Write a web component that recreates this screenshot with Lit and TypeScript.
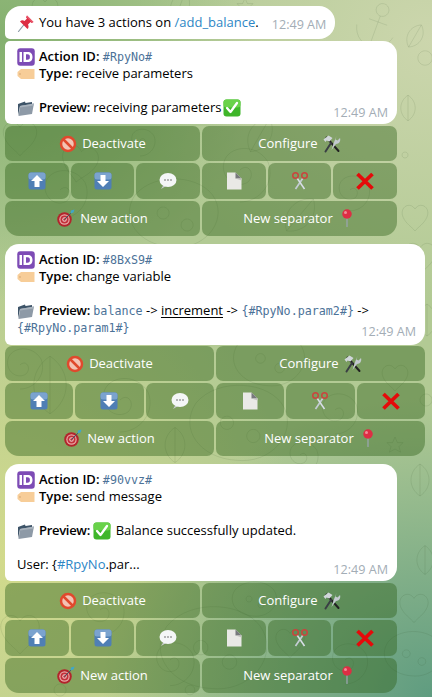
import { LitElement, html, css, svg, nothing } from "lit";
import { customElement } from "lit/decorators.js";

const icons: Record<string, unknown> = {
  pin: svg`<path d="M3 35 L15 20" stroke="#8a98a5" stroke-width="2.400" stroke-linecap="round"/><path d="M20 3 L33 16 L29 18 L27 16 L22 21 C24 25 23 28 21 30 L6 15 C9 12 12 12 15 14 L20 9 L18 7 Z" fill="#dd2e44"/><path d="M20 3 L33 16 L30 17 L19 6Z" fill="#ea596e"/>`,
  id: svg`<rect x="0.500" y="0.500" width="35" height="35" rx="6" fill="#7d4bb5"/><rect x="5" y="8" width="5" height="20" fill="#fff"/><path d="M13 8 H21 C28 8 31 12 31 18 C31 24 28 28 21 28 H13 Z M18 12.500 V23.500 H21 C24.500 23.500 25.800 21.500 25.800 18 C25.800 14.500 24.500 12.500 21 12.500 Z" fill="#fff" fill-rule="evenodd"/>`,
  tag: svg`<path d="M1 14 L8 8 H35 V28 H8 L1 22 Z" fill="#f7cd98"/><circle cx="6" cy="18" r="1.400" fill="#c79a66"/>`,
  folder: svg`<path d="M2 10 L16 5 L17 8 L30 6 V12 L6 14 L2 33Z" fill="#3e5468"/><path d="M6 14 L34 9 L30 30 L3 34Z" fill="#8e9aa7"/><path d="M6 14 L34 9 L33 13 L6 17Z" fill="#a9b3bd"/>`,
  check: svg`<rect x="1" y="1" width="34" height="34" rx="6" fill="#3fb62a"/><rect x="1" y="1" width="34" height="16" rx="6" fill="#69d24a"/><path d="M8 18 L15 26 L28 8" fill="none" stroke="#fff" stroke-width="4.600" stroke-linecap="round" stroke-linejoin="round"/>`,
  no: svg`<circle cx="18" cy="18" r="14" fill="#f3c3b4" stroke="#e0492d" stroke-width="5"/><path d="M8 8 L28 28" stroke="#e0492d" stroke-width="5"/>`,
  tools: svg`<path d="M7 5 L31 32" stroke="#222" stroke-width="4" stroke-linecap="round"/><path d="M16 16 L5 33" stroke="#3a3f44" stroke-width="4" stroke-linecap="round"/><path d="M1 9 L11 1 L19 6 L13 13 L7 11 L5 14Z" fill="#d0d6da"/><path d="M21 17 L27 2 L25 9 L29 11 L34 6 C36 12 32 18 26 18 L17 30 Z" fill="#c3cacf"/>`,
  up: svg`<rect x="1" y="1" width="34" height="34" rx="5" fill="#4f7fb5"/><rect x="1" y="1" width="34" height="14" rx="5" fill="#7ba3cf"/><path d="M18 6 L30 18 H23 V30 H13 V18 H6Z" fill="#fff"/>`,
  down: svg`<rect x="1" y="1" width="34" height="34" rx="5" fill="#4f7fb5"/><rect x="1" y="1" width="34" height="14" rx="5" fill="#7ba3cf"/><path d="M18 30 L30 18 H23 V6 H13 V18 H6Z" fill="#fff"/>`,
  chat: svg`<path d="M9 26 L4 34 L14 28Z" fill="#c9ccd0"/><ellipse cx="18" cy="16" rx="17" ry="14" fill="#f4f6f7"/><circle cx="12" cy="16" r="1.500" fill="#555"/><circle cx="18" cy="16" r="1.500" fill="#555"/><circle cx="24" cy="16" r="1.500" fill="#555"/>`,
  page: svg`<path d="M4 1 H21 L33 13 V35 H4Z" fill="#e9e9e6"/><path d="M21 1 L33 13 H21Z" fill="#77797c"/><path d="M21 13 H33 V17Z" fill="#c4c4c0"/>`,
  scissors: svg`<path d="M12 12 L27 34 M24 12 L9 34" stroke="#c4ccd4" stroke-width="3.400"/><path d="M12 12 L27 34" stroke="#e7ecef" stroke-width="1.400"/><circle cx="9" cy="7" r="5.500" fill="none" stroke="#c9453e" stroke-width="3"/><circle cx="27" cy="7" r="5.500" fill="none" stroke="#c9453e" stroke-width="3"/>`,
  x: svg`<path d="M3 4 L33 33 M33 4 L3 33" stroke="#e50a0a" stroke-width="7.500"/>`,
  dart: svg`<circle cx="15" cy="21" r="14.500" fill="#b3242c"/><circle cx="15" cy="21" r="10.500" fill="#e8a8a4"/><circle cx="15" cy="21" r="8" fill="#c4303a"/><circle cx="15" cy="21" r="4.500" fill="#ecc"/><circle cx="15" cy="21" r="2.500" fill="#c4303a"/><path d="M15 21 L29 7" stroke="#3d5a68" stroke-width="2"/><path d="M27 9 L28 3 L35 1 L33 7 Z" fill="#3fa7c9"/>`,
  rpin: svg`<path d="M18 18 L18 35" stroke="#9aa5ae" stroke-width="2.600" stroke-linecap="round"/><circle cx="18" cy="10" r="9.500" fill="#dd2e44"/><circle cx="15" cy="7" r="3" fill="#f28a96"/>`,
};

const icon = (name: string, cls = "") =>
  html`<svg class="ic ${cls}" viewBox="0 0 36 36" aria-hidden="true">${icons[name]}</svg>`;

const d = (x: number, y: number, s: number, r: number, p: string) =>
  svg`<path transform="translate(${x} ${y}) rotate(${r}) scale(${s})" d="${p}" vector-effect="non-scaling-stroke"/>`;
const HEART = "M0 -6 C-5 -14 -16 -8 -12 2 C-9 9 -3 12 0 16 C3 12 9 9 12 2 C16 -8 5 -14 0 -6Z";
const LEAF = "M0 -16 C12 -8 12 8 0 16 C-12 8 -12 -8 0 -16Z M0 -16 V16";
const BLOB = "M-20 -10 C-10 -22 14 -20 20 -8 C26 4 14 18 -2 16 C-18 15 -28 2 -20 -10Z M-6 -4 A3 3 0 1 0 -5.900 -4 M6 2 A3 3 0 1 0 6.100 2";
const SPIRAL = "M0 0 C4 -4 8 2 4 6 C-2 10 -10 4 -8 -4 C-6 -12 8 -14 14 -4 C18 6 10 16 0 16";
const ANCHOR = "M0 -14 A4 4 0 1 0 0.100 -14 M0 -6 V14 M-12 4 C-10 12 -4 14 0 14 C4 14 10 12 12 4 M-6 -2 H6";
const STAR = "M0 -10 L3 -3 L10 -3 L5 2 L7 9 L0 5 L-7 9 L-5 2 L-10 -3 L-3 -3Z";
const RING = "M0 -6 A6 6 0 1 0 0.100 -6";
const doodles: [number, number, number, number, string][] = [
  [377, 25, 1.6, 20, ANCHOR], [415, 36, 0.8, 30, LEAF], [408, 108, 0.8, 0, LEAF], [425, 58, 1.2, 0, RING],
  [45, 8, 1, 0, HEART], [180, 6, 1, 20, LEAF], [245, 6, 0.8, 0, STAR], [405, 155, 0.5, 0, RING],
  [80, 160, 1.4, 10, HEART], [60, 190, 1.8, 0, SPIRAL], [175, 215, 2, 0, BLOB], [20, 135, 1.3, 0, HEART],
  [240, 170, 2, 0, SPIRAL], [300, 215, 1.3, 40, LEAF], [350, 190, 1.3, 0, SPIRAL], [415, 215, 1, 0, HEART],
  [140, 140, 1, 0, SPIRAL], [260, 135, 1.2, 30, LEAF], [420, 255, 1.2, 0, HEART], [427, 320, 1, 0, LEAF],
  [50, 385, 1.8, 0, LEAF], [120, 400, 2, 0, SPIRAL], [270, 360, 1.6, 0, BLOB], [240, 425, 2.200, 0, BLOB],
  [335, 410, 1.5, 0, SPIRAL], [395, 375, 1, 0, HEART], [395, 445, 0.8, 0, STAR], [175, 445, 1.1, 0, LEAF],
  [20, 365, 1.5, 0, SPIRAL], [426, 400, 1, 0, RING], [300, 455, 1.2, 0, SPIRAL], [420, 480, 1, 0, LEAF],
  [20, 630, 1.5, 0, HEART], [100, 610, 1.6, 0, SPIRAL], [170, 660, 1.6, 0, SPIRAL], [215, 650, 2.400, 0, BLOB],
  [290, 640, 1.1, 0, HEART], [345, 660, 1.5, 0, SPIRAL], [414, 605, 1.1, 0, HEART], [414, 655, 1.3, 0, BLOB],
  [255, 600, 1, 0, BLOB], [190, 690, 0.8, 0, RING], [60, 690, 1, 0, RING], [425, 560, 0.9, 0, LEAF],
];

type Row = { label?: string; icon?: string; after?: boolean }[];
const keyboard: Row[] = [
  [{ label: "Deactivate", icon: "no" }, { label: "Configure", icon: "tools", after: true }],
  [{ icon: "up" }, { icon: "down" }, { icon: "chat" }, { icon: "page" }, { icon: "scissors" }, { icon: "x" }],
  [{ label: "New action", icon: "dart" }, { label: "New separator", icon: "rpin", after: true }],
];

@customElement("action-keyboard")
class ActionKeyboard extends LitElement {
  static styles = css`
    :host { display: flex; flex-direction: column; gap: 2px; margin-top: 2px; }
    .row { display: flex; gap: 2px; }
    .btn { flex: 1 1 0; min-width: 0; height: 35.330px; display: flex; align-items: center; justify-content: center; gap: 5px;
      background: rgba(45, 95, 25, 0.42); border-radius: 7px; color: #fff; font-size: 13px; font-weight: 500; }
    .last .btn:first-child { border-bottom-left-radius: 14px; }
    .last .btn:last-child { border-bottom-right-radius: 14px; }
    .ic { width: 18px; height: 18px; flex: none; }
  `;
  render() {
    return keyboard.map(
      (row, i) => html`<div class="row ${i === 2 ? "last" : ""}">
        ${row.map((b) => {
          const ic = html`<svg class="ic" viewBox="0 0 36 36" aria-hidden="true">${icons[b.icon!]}</svg>`;
          return html`<div class="btn">${b.after ? nothing : ic}${b.label ? html`<span>${b.label}</span>` : nothing}${b.after ? ic : nothing}</div>`;
        })}
      </div>`
    );
  }
}

@customElement("app-root")
class AppRoot extends LitElement {
  static styles = css`
    :host { display: block; font-family: "Open Sans", "Noto Sans", sans-serif; font-size: 13px; line-height: 17px; color: #000; }
    .chat { position: relative; width: 432px; height: 697px; overflow: hidden; box-sizing: border-box;
      padding: 6px 7px 0 5px; display: flex; flex-direction: column; align-items: flex-start;
      background:
        radial-gradient(ellipse 260px 260px at 0 40px, #84b06f 0, rgba(132,176,111,0) 100%),
        radial-gradient(ellipse 300px 260px at 432px 40px, #ccd6ad 0, rgba(204,214,173,0) 100%),
        radial-gradient(ellipse 330px 300px at 432px 697px, #5f9c80 0, rgba(95,156,128,0) 100%),
        radial-gradient(ellipse 300px 330px at 0 560px, #d2da8c 0, rgba(210,218,140,0) 100%),
        #b2ca94; }
    .doodles { position: absolute; inset: 0; width: 432px; height: 697px; fill: none; stroke: rgba(35, 65, 30, 0.1); stroke-width: 1; }
    .group { position: relative; width: 392px; display: flex; flex-direction: column; }
    .group + .group { margin-top: 8px; }
    .wide { width: 420px; }
    .wide .bubble { padding-bottom: 9px; }
    .wide .time { bottom: 5px; }
    .wide action-keyboard { margin-top: 1px; }
    .intro { position: relative; align-self: flex-start; background: #fff; border-radius: 16px 16px 16px 5px; padding: 8px 9px 8px 12px;
      display: flex; align-items: flex-end; gap: 13px; margin-bottom: 2px; }
    .intro .time { position: static; margin-bottom: -2px; }
    .bubble { position: relative; background: #fff; padding: 7px 11px 8px 12px; border-radius: 14px 14px 14px 6px; white-space: nowrap; }
    .first { border-top-left-radius: 5px; }
    .time { position: absolute; right: 9px; bottom: 3px; font-size: 12.600px; color: #a3adb6; line-height: 16px; }
    .ic { width: 18px; height: 18px; vertical-align: -1px; margin: -6px 4px -4px 0; }
    .ic.inline { margin: -6px 1px -4px 0; }
    .ic.pull { margin-left: -2px; }
    b { font-weight: 600; }
    .tight { letter-spacing: -0.3px; }
    .code { font-family: "DejaVu Sans Mono", "Liberation Mono", monospace; font-size: 11.700px; line-height: 1; color: #4c7298; }
    .link { color: #2d86c5; }
    u { text-underline-offset: 2px; }
    .gap { height: 17px; }
  `;
  private head(id: string, type: string) {
    return html`<div>${icon("id")}<b>Action ID:</b> <span class="code">${id}</span></div>
      <div>${icon("tag")}<b>Type:</b> ${type}</div>
      <div class="gap"></div>`;
  }
  render() {
    return html`<div class="chat">
      <svg class="doodles" viewBox="0 0 432 697" aria-hidden="true">${doodles.map((a) => d(...a))}</svg>
      <div class="group">
        <div class="intro">
          <div>${icon("pin")}You have 3 actions on <span class="link">/add_balance</span>.</div>
          <span class="time">12:49 AM</span>
        </div>
        <div class="bubble first">
          ${this.head("#RpyNo#", "receive parameters")}
          <div>${icon("folder")}<b class="tight">Preview:</b> receiving parameters ${icon("check", "inline pull")}</div>
          <span class="time">12:49 AM</span>
        </div>
        <action-keyboard></action-keyboard>
      </div>
      <div class="group wide">
        <div class="bubble">
          ${this.head("#8BxS9#", "change variable")}
          <div>${icon("folder")}<b class="tight">Preview:</b> <span class="code">balance</span> -&gt; <u>increment</u> -&gt; <span class="code">{#RpyNo.param2#}</span> -&gt;</div>
          <div><span class="code">{#RpyNo.param1#}</span></div>
          <span class="time">12:49 AM</span>
        </div>
        <action-keyboard></action-keyboard>
      </div>
      <div class="group">
        <div class="bubble">
          ${this.head("#90vvz#", "send message")}
          <div>${icon("folder")}<b class="tight">Preview:</b> ${icon("check", "inline")} Balance successfully updated.</div>
          <div class="gap"></div>
          <div>User: {<span class="link">#RpyNo</span>.par...</div>
          <span class="time">12:49 AM</span>
        </div>
        <action-keyboard></action-keyboard>
      </div>
    </div>`;
  }
}
